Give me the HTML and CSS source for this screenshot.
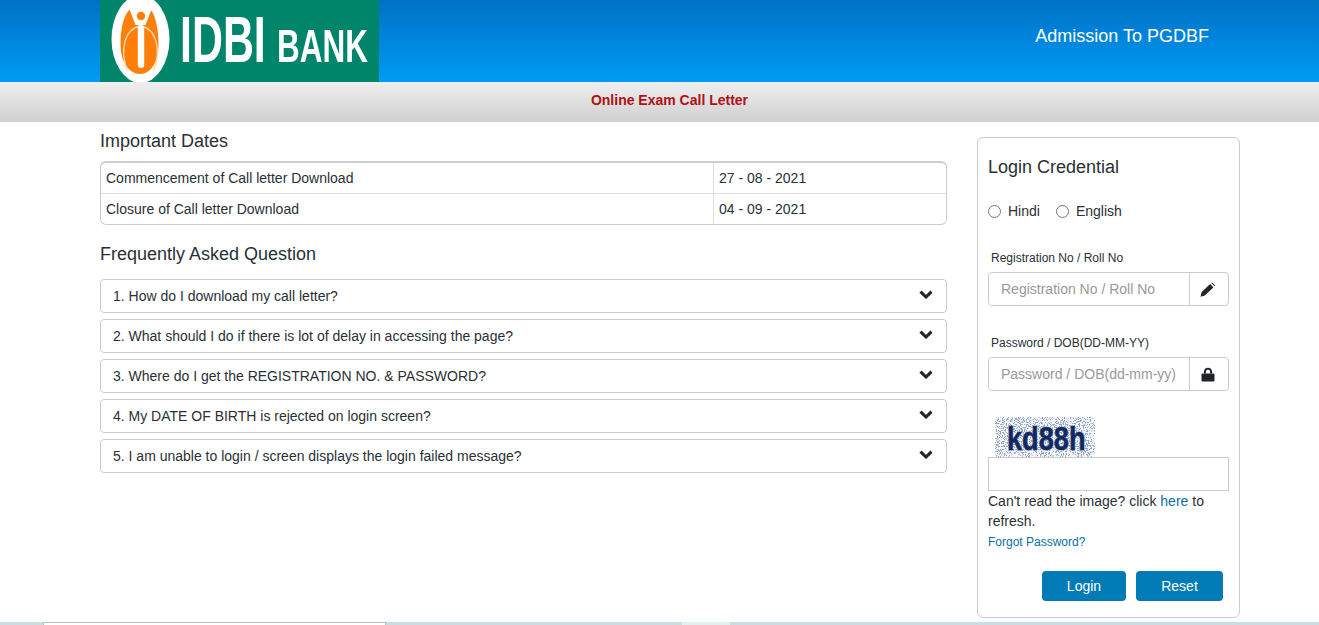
FILE: index.html
```html
<!DOCTYPE html>
<html lang="en">
<head>
<meta charset="utf-8">
<title>Admission To PGDBF</title>
<link rel="stylesheet" href="styles.css">
</head>
<body>
<header class="top">
  <div class="logo">
    <svg class="logo-svg" width="279" height="82" viewBox="0 0 279 82">
      <ellipse cx="40.5" cy="39" rx="29" ry="44" fill="#fff"/>
      <path d="M29 10 C23 17 20.500 30 20.500 44 C20.500 62 29 74 40 74 C51 74 58.500 62 58.500 44 C58.500 30 56 17 51 10 Z" fill="#ff7f0a"/>
      <path d="M29 8 L35.500 25 H45.500 L52 8 Z" fill="#fff"/>
      <path d="M27 70 C20 50 24 29 40.500 26 C57 29 61 50 54 70" fill="none" stroke="#ffd9b0" stroke-width="1.3"/>
      <circle cx="41" cy="16" r="4.2" fill="#ff7f0a"/>
      <rect x="37.800" y="25" width="6.400" height="43" rx="3" fill="#fff"/>
      <g transform="translate(80 62) scale(.66 1)"><text class="logo-idbi">IDBI</text></g>
      <g transform="translate(177 62) scale(.67 1)"><text class="logo-bank">BANK</text></g>
    </svg>
  </div>
  <div class="top-title">Admission To PGDBF</div>
</header>
<div class="subbar">Online Exam Call Letter</div>

<main class="main">
  <section class="left">
    <h2 class="heading">Important Dates</h2>
    <div class="dates">
      <div class="date-row">
        <div class="date-name">Commencement of Call letter Download</div>
        <div class="date-val">27 - 08 - 2021</div>
      </div>
      <div class="date-row">
        <div class="date-name">Closure of Call letter Download</div>
        <div class="date-val">04 - 09 - 2021</div>
      </div>
    </div>
    <h2 class="heading faq-heading">Frequently Asked Question</h2>
    <div class="faq">
      <div class="faq-item"><span>1. How do I download my call letter?</span><svg class="chev" width="14" height="10" viewBox="0 0 14 10"><path d="M1.500 2.600 L7 8 L12.500 2.600" fill="none" stroke="#212529" stroke-width="3"/></svg></div>
      <div class="faq-item"><span>2. What should I do if there is lot of delay in accessing the page?</span><svg class="chev" width="14" height="10" viewBox="0 0 14 10"><path d="M1.500 2.600 L7 8 L12.500 2.600" fill="none" stroke="#212529" stroke-width="3"/></svg></div>
      <div class="faq-item"><span>3. Where do I get the REGISTRATION NO. &amp; PASSWORD?</span><svg class="chev" width="14" height="10" viewBox="0 0 14 10"><path d="M1.500 2.600 L7 8 L12.500 2.600" fill="none" stroke="#212529" stroke-width="3"/></svg></div>
      <div class="faq-item"><span>4. My DATE OF BIRTH is rejected on login screen?</span><svg class="chev" width="14" height="10" viewBox="0 0 14 10"><path d="M1.500 2.600 L7 8 L12.500 2.600" fill="none" stroke="#212529" stroke-width="3"/></svg></div>
      <div class="faq-item"><span>5. I am unable to login / screen displays the login failed message?</span><svg class="chev" width="14" height="10" viewBox="0 0 14 10"><path d="M1.500 2.600 L7 8 L12.500 2.600" fill="none" stroke="#212529" stroke-width="3"/></svg></div>
    </div>
  </section>

  <aside class="panel">
    <h2 class="panel-title">Login Credential</h2>
    <div class="langs">
      <label class="lang"><input class="radio" type="radio" name="lang"><span>Hindi</span></label>
      <label class="lang"><input class="radio" type="radio" name="lang"><span>English</span></label>
    </div>
    <div class="field-label">Registration No / Roll No</div>
    <div class="group">
      <input class="group-input" type="text" placeholder="Registration No / Roll No">
      <span class="addon"><svg class="addon-icon" width="16" height="15" viewBox="0 0 16 15"><path d="M0.500 14.700 L1.500 10.200 L10.100 2.100 L13.400 5.400 L4.800 13.500 Z M11.200 1 L12.100 0.400 L15.100 3.400 L14.500 4.300 Z" fill="#212529"/></svg></span>
    </div>
    <div class="field-label second">Password / DOB(DD-MM-YY)</div>
    <div class="group">
      <input class="group-input" type="text" placeholder="Password / DOB(dd-mm-yy)">
      <span class="addon"><svg class="addon-icon" width="14" height="15" viewBox="0 0 14 15"><path d="M3 6.500 V4.600 C3 2.200 4.700 0.800 7 0.800 C9.300 0.800 11 2.200 11 4.600 V6.500 H9 V4.600 C9 3.400 8.200 2.800 7 2.800 C5.800 2.800 5 3.400 5 4.600 V6.500 Z" fill="#212529"/><rect x="0.500" y="6.500" width="13" height="8" rx="1" fill="#212529"/></svg></span>
    </div>
    <div class="captcha">
      <svg width="100" height="40" viewBox="0 0 100 40">
        <defs>
          <filter id="noise" x="0" y="0" width="100%" height="100%">
            <feTurbulence type="fractalNoise" baseFrequency="0.95" numOctaves="2" seed="7"/>
            <feColorMatrix type="matrix" values="0 0 0 0 0.28  0 0 0 0 0.36  0 0 0 0 0.55  0 0 0 9 -4.600"/>
          </filter>
        </defs>
        <rect width="100" height="40" fill="#f6f8fb"/>
        <rect width="100" height="40" filter="url(#noise)"/>
        <g transform="translate(12 33) scale(.8 1)"><text class="captcha-text">kd88h</text></g>
      </svg>
    </div>
    <input class="captcha-input" type="text">
    <p class="help">Can't read the image? click <a class="link" href="#">here</a> to<br>refresh.</p>
    <a class="forgot" href="#">Forgot Password?</a>
    <div class="actions">
      <button class="btn btn-login" type="button">Login</button>
      <button class="btn btn-reset" type="button">Reset</button>
    </div>
  </aside>
</main>

<footer class="band">
  <div class="band-box"></div>
  <div class="band-light"></div>
</footer>
</body>
</html>
```
FILE: styles.css
```css
* { box-sizing: border-box; }
html, body { margin: 0; padding: 0; height: 625px; overflow: hidden; background: #fff; }
body { font-family: "Liberation Sans", Arial, sans-serif; font-size: 14px; color: #2a3035; }

.top {
  height: 82px;
  display: flex;
  align-items: flex-start;
  justify-content: space-between;
  padding: 0 110px 0 100px;
  background: linear-gradient(to bottom, #0071c5, #009bf4);
}
.logo { width: 279px; height: 82px; background: #00856b; overflow: hidden; }
.logo-svg { display: block; filter: blur(0.4px); }
.logo-idbi { font-family: "Liberation Sans", sans-serif; font-weight: bold; font-size: 65px; fill: #fff; }
.logo-bank { font-family: "Liberation Sans", sans-serif; font-weight: bold; font-size: 47px; fill: #fff; }
.top-title { color: #fff; font-size: 18px; line-height: 20px; margin-top: 26px; }

.subbar {
  height: 40px;
  line-height: 37px;
  padding-left: 20px;
  text-align: center;
  font-weight: bold;
  color: #b01116;
  background: linear-gradient(to bottom, #efefef, #cfcfcf);
}

.main { height: 500px; display: flex; align-items: flex-start; padding: 0 79px 0 100px; justify-content: space-between; }
.left { width: 847px; }
.heading { margin: 9px 0 9px; font-size: 18px; font-weight: normal; line-height: 21px; }
.faq-heading { margin: 19px 0 14px; }

.dates { border: 1px solid #ccc; border-top-width: 2px; border-radius: 6px; height: 64px; }
.date-row { display: flex; height: 30px; line-height: 30px; }
.date-row + .date-row { height: 31px; border-top: 1px solid #ddd; }
.date-name { width: 613px; padding-left: 5px; border-right: 1px solid #ddd; }
.date-val { padding-left: 5px; }

.faq { display: flex; flex-direction: column; gap: 6px; }
.faq-item {
  height: 34px;
  display: flex;
  justify-content: space-between;
  align-items: center;
  padding: 0 13px 0 12px;
  border: 1px solid #ccc;
  border-radius: 4px;
}
.chev { margin-top: -5px; }

.panel {
  width: 263px;
  height: 481px;
  margin-top: 15px;
  padding: 0 10px;
  border: 1px solid #ccc;
  border-radius: 6px;
}
.panel-title { margin: 19px 0 0; font-size: 18px; font-weight: normal; line-height: 21px; }
.langs { display: flex; gap: 16px; margin-top: 23px; height: 20px; align-items: center; }
.lang { display: flex; align-items: center; gap: 7px; }
.radio { margin: 0; width: 13px; height: 13px; }

.field-label { font-size: 12px; line-height: 14px; margin: 30px 0 7px 3px; }
.group { display: flex; width: 241px; height: 34px; border: 1px solid #ccc; border-radius: 4px; }
.group-input {
  flex: 1;
  min-width: 0;
  border: 0;
  border-radius: 4px 0 0 4px;
  padding: 0 12px;
  font: 14px "Liberation Sans", Arial, sans-serif;
  outline: 0;
  background: #fff;
}
.group-input::placeholder { color: #999; opacity: 1; }
.addon { width: 39px; display: flex; align-items: center; justify-content: center; border-left: 1px solid #ccc; }
.addon-icon { margin-left: -2px; }

.captcha { margin: 26px 0 0 7px; height: 40px; }
.captcha svg { display: block; }
.captcha-text { font-family: "Liberation Sans", sans-serif; font-weight: bold; font-size: 34px; fill: #12285f; stroke: #5c75a8; stroke-width: 1; paint-order: stroke; }
.captcha-input { display: block; width: 241px; height: 34px; border: 1px solid #ccc; background: #fff; padding: 0; }

.help { margin: 0; line-height: 20px; width: 236px; }
.link { color: #0a70a8; text-decoration: none; }
.forgot { display: block; font-size: 12px; line-height: 14px; margin-top: 4px; color: #0a70a8; text-decoration: none; }

.actions { display: flex; gap: 10px; margin: 22px 0 0 54px; }
.btn {
  height: 30px;
  border: 0;
  border-radius: 4px;
  background: #007bb5;
  color: #fff;
  font: 14px "Liberation Sans", Arial, sans-serif;
  padding: 0;
}
.btn-login { width: 84px; }
.btn-reset { width: 87px; }

.band { height: 3px; display: flex; background: #c8dde4; padding-left: 43px; overflow: hidden; }
.band-box { width: 343px; height: 3px; background: #fff; border: 1px solid #bbb; border-bottom: 0; }
.band-light { width: 48px; height: 3px; margin-left: 296px; background: #e4eff0; }
```
